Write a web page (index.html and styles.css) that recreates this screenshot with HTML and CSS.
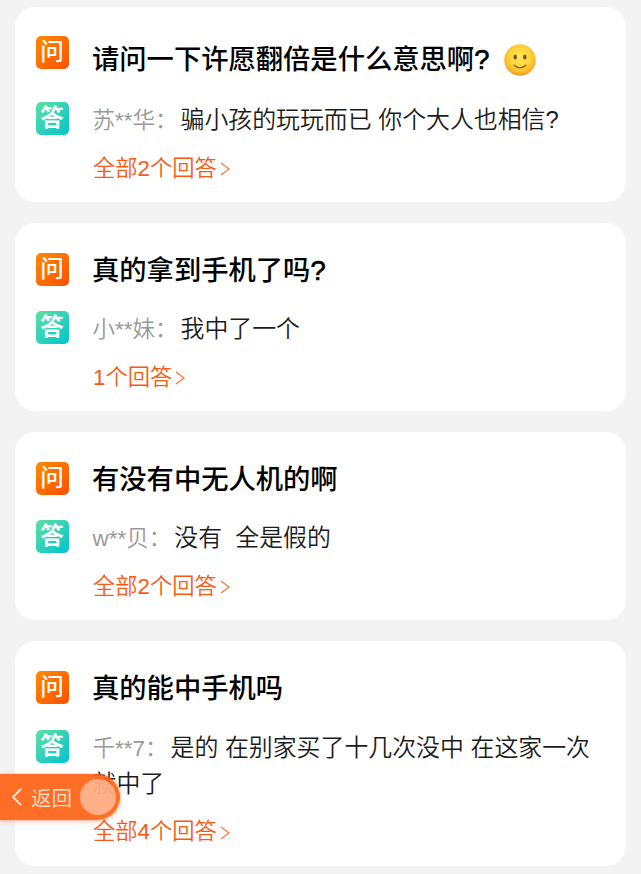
FILE: index.html
```
<!DOCTYPE html>
<html lang="zh-CN">
<head>
	<title>问大家</title>
	<meta charset="utf-8">
	<link rel="stylesheet" href="styles.css">
</head>
<body>
<div class="wrap">
	<div class="card">
		<div class="row ask has-emoji">
			<i class="tag tag-q">问</i>
			<h3>请问一下许愿翻倍是什么意思啊<b>?</b><svg class="emoji" viewBox="0 0 32 32">
				<defs>
					<radialGradient id="face" cx="50%" cy="42%" r="56%">
						<stop offset="0" stop-color="#ffe75a"/>
						<stop offset="0.6" stop-color="#ffd43a"/>
						<stop offset="0.88" stop-color="#fdb52a"/>
						<stop offset="1" stop-color="#ee961c"/>
					</radialGradient>
				</defs>
				<circle cx="16" cy="16" r="15.7" fill="url(#face)"/>
				<ellipse cx="11.2" cy="13" rx="1.7" ry="2.6" fill="#7a4a12"/>
				<ellipse cx="20.8" cy="13" rx="1.7" ry="2.6" fill="#7a4a12"/>
				<path d="M10 21.3Q16 26.3 22 21.3" fill="none" stroke="#8a5414" stroke-width="1.3" stroke-linecap="round"/>
			</svg></h3>
		</div>
		<div class="row answer">
			<i class="tag tag-a">答</i>
			<p><span class="name">苏**华：</span>骗小孩的玩玩而已 你个大人也相信?</p>
		</div>
		<a class="more" href="#">全部2个回答<svg viewBox="0 0 10 14"><path d="M1 1L9 7L1 13"/></svg></a>
	</div>

	<div class="card">
		<div class="row ask">
			<i class="tag tag-q">问</i>
			<h3>真的拿到手机了吗<b>?</b></h3>
		</div>
		<div class="row answer">
			<i class="tag tag-a">答</i>
			<p><span class="name">小**妹：</span>我中了一个</p>
		</div>
		<a class="more" href="#">1个回答<svg viewBox="0 0 10 14"><path d="M1 1L9 7L1 13"/></svg></a>
	</div>

	<div class="card">
		<div class="row ask">
			<i class="tag tag-q">问</i>
			<h3>有没有中无人机的啊</h3>
		</div>
		<div class="row answer">
			<i class="tag tag-a">答</i>
			<p><span class="name">w**贝：</span>没有&nbsp; 全是假的</p>
		</div>
		<a class="more" href="#">全部2个回答<svg viewBox="0 0 10 14"><path d="M1 1L9 7L1 13"/></svg></a>
	</div>

	<div class="card">
		<div class="row ask">
			<i class="tag tag-q">问</i>
			<h3>真的能中手机吗</h3>
		</div>
		<div class="row answer">
			<i class="tag tag-a">答</i>
			<p><span class="name">千**7：</span>是的 在别家买了十几次没中 在这家一次就中了</p>
		</div>
		<a class="more" href="#">全部4个回答<svg viewBox="0 0 10 14"><path d="M1 1L9 7L1 13"/></svg></a>
	</div>
</div>

<a class="back" href="#">
	<svg viewBox="0 0 10 18"><path d="M9 1L1 9L9 17"/></svg>
	<span>返回</span>
	<i class="dot"></i>
</a>
</body>
</html>
```
FILE: styles.css
```
*{
	box-sizing: border-box;
}
body{
	margin: 0;
	height: 874px;
	overflow: hidden;
	background-color: #f3f3f3;
	font-family: "Liberation Sans","Noto Sans CJK SC",sans-serif;
}
h3,p{
	margin: 0;
}
i{
	font-style: normal;
}
a{
	text-decoration: none;
}
.wrap{
	display: flex;
	flex-direction: column;
	gap: 20.7px;
	padding: 7px 15.5px 0 15px;
}
.card{
	padding: 29px 20px 18.5px 20.5px;
	border-radius: 20px;
	background-color: #fff;
}
.row{
	display: flex;
	align-items: flex-start;
	gap: 24px;
}
.tag{
	flex: none;
	width: 33px;
	height: 33px;
	border-radius: 5px;
	color: #fff;
	font-size: 23.5px;
	font-weight: 500;
	line-height: 32px;
	text-align: center;
}
.tag-q{
	margin-top: 1px;
	background: linear-gradient(135deg,#ff8a00,#ff5000);
}
.tag-a{
	font-weight: 700;
	background: linear-gradient(135deg,#5fe0a0,#00c4d0);
}
.ask{
	height: 38px;
	margin-bottom: 21.5px;
}
/* 带表情的标题行更高 */
.has-emoji{
	height: 44.5px;
}
.ask h3{
	display: flex;
	align-items: center;
	height: 38px;
	margin-left: -.5px;
	color: #000;
	font-size: 27.3px;
	font-weight: 500;
	line-height: 38px;
	white-space: nowrap;
}
.ask b{
	font-weight: 500;
	-webkit-text-stroke: .7px #000;
}
.has-emoji .tag{
	margin-top: 0;
}
.has-emoji h3{
	height: 47px;
}
.emoji{
	width: 32px;
	height: 32px;
	margin-left: 14.5px;
}
.answer p{
	color: #1c1c1c;
	font-size: 23.9px;
	font-weight: 350;
	line-height: 36px;
}
.name{
	margin-right: 3px;
	color: #999;
	font-size: 22.5px;
	line-height: 1;
}
.more{
	display: flex;
	align-items: center;
	height: 30px;
	margin: 15.5px 0 0 57.5px;
	color: #f95a12;
	font-size: 22.3px;
	font-weight: 350;
	line-height: 30px;
}
.more svg{
	width: 10px;
	height: 14px;
	margin: 1px 0 0 3px;
	fill: none;
	stroke: #fa7438;
	stroke-width: 1.2;
}
/* 悬浮返回按钮 */
.back{
	position: fixed;
	left: 0;
	top: 774px;
	display: flex;
	align-items: center;
	width: 120px;
	height: 46px;
	padding-left: 12px;
	border-radius: 0 23px 23px 0;
	background-color: rgba(255,98,20,.92);
	box-shadow: 0 1px 4px rgba(255,90,20,.5);
	color: #ffe3d3;
	font-size: 20.5px;
	font-weight: 350;
}
.back svg{
	width: 10px;
	height: 18px;
	margin-right: 9px;
	fill: none;
	stroke: #ffe9dd;
	stroke-width: 1.8;
}
.dot{
	width: 36px;
	height: 36px;
	margin-left: 8px;
	border-radius: 50%;
	background-color: rgba(255,255,255,.45);
}
```
